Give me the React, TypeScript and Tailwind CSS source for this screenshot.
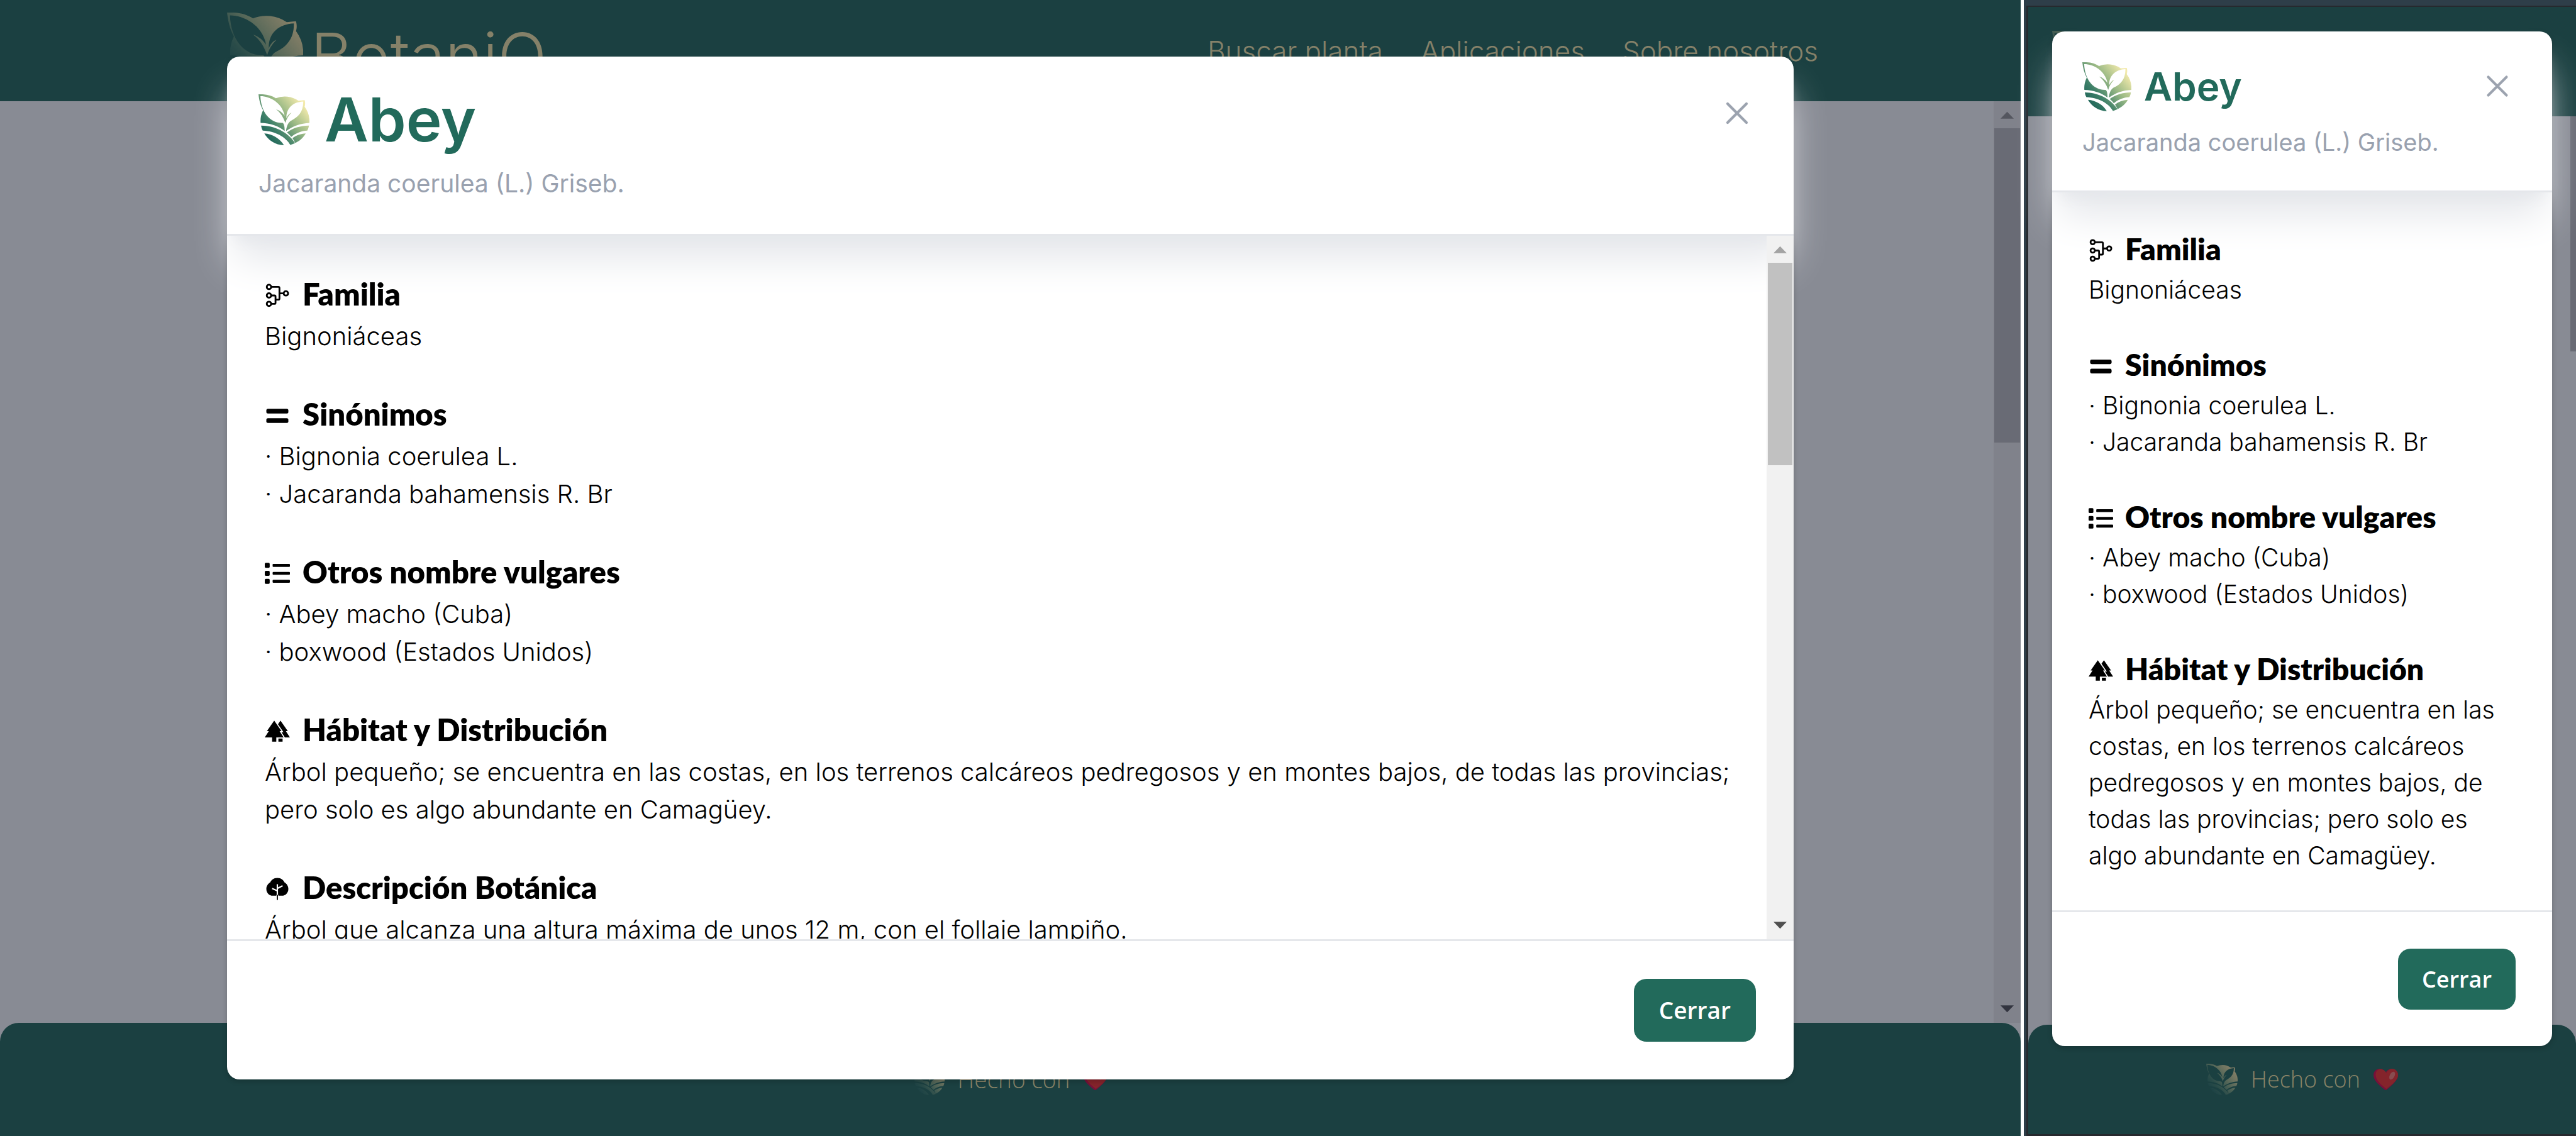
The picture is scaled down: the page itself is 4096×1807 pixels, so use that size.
import { useId, type ReactNode } from "react";
import { MdForest } from "react-icons/md";

type LogoTone = "bright" | "dim";

function Logo({ tone, className }: { tone: LogoTone; className: string }) {
  const id = useId();
  const stops =
    tone === "bright"
      ? ["#20675a", "#3d7f68", "#9dbb86", "#f3eaac"]
      : ["#1b4144", "#2a4c49", "#5a6a5a", "#857f67"];
  return (
    <svg viewBox="36 60 288 288" className={className} aria-hidden="true">
      <defs>
        <linearGradient id={id} gradientUnits="userSpaceOnUse" x1="85" y1="310" x2="300" y2="125">
          <stop offset="0" stopColor={stops[0]} />
          <stop offset="0.25" stopColor={stops[1]} />
          <stop offset="0.62" stopColor={stops[2]} />
          <stop offset="1" stopColor={stops[3]} />
        </linearGradient>
      </defs>
      <g fill={`url(#${id})`} fillRule="evenodd">
        <path d="M48 222 A138 138 0 0 1 62 150 C46 122 40 92 36 60 C78 58 110 66 134 82 A138 138 0 0 1 262 96 L297 93 C301 108 300 120 297 130 A138 138 0 0 1 324 222 C275 224 230 240 192 268 L184 268 C150 238 100 224 48 222 Z M47 71 C50 160 100 225 174 222 C182 230 184 245 184 268 L192 268 C194 240 205 216 222 208 C260 190 290 160 289 101 C230 103 192 140 194 195 C200 180 210 168 223 163 C206 180 194 200 188 222 C176 188 160 162 135 144 C155 150 172 164 184 182 C170 105 95 70 47 71 Z" />
        <path d="M51 237 C125 238 200 270 243 336 L231 341 L216 346 C190 300 130 268 60 265 C55 256 52 247 51 237 Z" />
        <path d="M69 281 C115 284 158 310 180 348 C130 346 92 320 69 281 Z" />
        <path d="M321 237 C275 238 230 250 197 276 C206 283 214 291 221 301 C245 280 280 266 312 265 C317 256 320 247 321 237 Z" />
        <path d="M303 281 C275 283 248 292 228 308 C234 316 239 325 243 335 C268 325 290 305 303 281 Z" />
      </g>
    </svg>
  );
}

function Heart({ className }: { className: string }) {
  return (
    <svg viewBox="0 0 46 41" className={className} role="img" aria-label="amor">
      <path d="M23 41 C19 37 0 25 0 12 C0 4 6 0 12 0 C17 0 21 3 23 7 C25 3 30 0 34 0 C40 0 46 5 46 12 C46 24 28 36 23 41 Z" fill="#771039" />
      <path d="M24 38 C19 33 4 24 4 11 C4 4 9 1 13 1 C18 1 22 4 24 8 C26 4 30 0 35 0 C41 0 46 5 46 12 C46 23 29 34 24 38 Z" fill="#84242b" />
      <ellipse cx="35" cy="13" rx="4.5" ry="8" transform="rotate(28 35 13)" fill="#884c4f" />
    </svg>
  );
}

function FamilyIcon({ className }: { className: string }) {
  return (
    <svg viewBox="0 0 48 48" className={className} fill="none" stroke="black" strokeWidth="3.4" aria-hidden="true">
      <circle cx="8" cy="7.7" r="4.2" />
      <circle cx="8" cy="24" r="4.2" />
      <circle cx="8" cy="40" r="4.2" />
      <circle cx="40.3" cy="20" r="4.2" />
      <path d="M12.2 7.7 H26 Q28 7.7 28 9.7 V30 Q28 32 26 32 H20.5 M28 20 H36 M12.2 24 H18.5 Q20.5 24 20.5 26 V38 Q20.5 40 18.5 40 H12.2" />
    </svg>
  );
}

function EqualsIcon({ className }: { className: string }) {
  return (
    <svg viewBox="0 0 48 48" className={className} aria-hidden="true">
      <rect x="3" y="11" width="42" height="9" rx="3" />
      <rect x="3" y="29" width="42" height="9" rx="3" />
    </svg>
  );
}

function ListIcon({ className }: { className: string }) {
  return (
    <svg viewBox="0 0 48 48" className={className} aria-hidden="true">
      <rect x="0" y="4" width="9.4" height="9.4" rx="2" />
      <rect x="0" y="19.3" width="9.4" height="9.4" rx="2" />
      <rect x="0" y="34.6" width="9.4" height="9.4" rx="2" />
      <rect x="15" y="6" width="33" height="5.6" rx="1.5" />
      <rect x="15" y="21.2" width="33" height="5.6" rx="1.5" />
      <rect x="15" y="36.4" width="33" height="5.6" rx="1.5" />
    </svg>
  );
}

function TreeIcon({ className }: { className: string }) {
  return (
    <svg viewBox="0 0 48 48" className={className} aria-hidden="true">
      <path d="M24 3 C31 3 36 7 37.5 11.5 C42 14 45 19 45 24 C45 32 39 37 33 37 H15 C9 37 3 32 3 24 C3 19 6 14 10.5 11.5 C12 7 17 3 24 3 Z" />
      <path d="M24 15 V35.5 M24 27.5 L14 23 M24 23 L34 18" stroke="white" strokeWidth="2.6" fill="none" />
      <path d="M24 35.5 V45" stroke="white" strokeWidth="4" />
      <path d="M24 35.5 V45" stroke="black" strokeWidth="2.2" />
    </svg>
  );
}

function CloseIcon({ className }: { className: string }) {
  return (
    <svg viewBox="0 0 24 24" className={className} fill="none" stroke="#9ca3af" strokeWidth="1.7" strokeLinecap="round" aria-hidden="true">
      <path d="M6 6 L18 18 M18 6 L6 18" />
    </svg>
  );
}

function Arrow({ up, color }: { up?: boolean; color: string }) {
  return (
    <svg viewBox="0 0 51 51" className="block w-full shrink-0" aria-hidden="true">
      <path d={up ? "M13 33 L38 33 L25.5 20 Z" : "M13 18 L38 18 L25.5 31 Z"} fill={color} />
    </svg>
  );
}

type Section = {
  title: string;
  icon: (p: { className: string }) => ReactNode;
  lines: string[];
};

const sections: Section[] = [
  { title: "Familia", icon: FamilyIcon, lines: ["Bignoniáceas"] },
  { title: "Sinónimos", icon: EqualsIcon, lines: ["· Bignonia coerulea L.", "· Jacaranda bahamensis R. Br"] },
  { title: "Otros nombre vulgares", icon: ListIcon, lines: ["· Abey macho (Cuba)", "· boxwood (Estados Unidos)"] },
  {
    title: "Hábitat y Distribución",
    icon: ({ className }) => <MdForest className={className} />,
    lines: [
      "Árbol pequeño; se encuentra en las costas, en los terrenos calcáreos pedregosos y en montes bajos, de todas las provincias; pero solo es algo abundante en Camagüey.",
    ],
  },
];

const description: Section = {
  title: "Descripción Botánica",
  icon: TreeIcon,
  lines: ["Árbol que alcanza una altura máxima de unos 12 m, con el follaje lampiño."],
};

const wide = {
  header: "px-[50px] pt-[50px] pb-[50px]",
  titleRow: "h-[100px] gap-[24px]",
  logo: "size-[81px]",
  title: "text-[96px]",
  subtitle: "mt-[22px] text-[39px] leading-[60px]",
  close: "m-[10px]",
  closeIcon: "size-[60px]",
  body: "pl-[60px] pr-[20px] pt-[60px] gap-[61px]",
  headingRow: "h-[70px] gap-[20px] text-[49px]",
  headingIcon: "size-[40px]",
  text: "text-[40px] leading-[60px]",
  footer: "p-[60px]",
  button: "h-[100px] px-[40px] text-[37px]",
};

const narrow: typeof wide = {
  header: "px-[48px] pt-[48px] pb-[48px]",
  titleRow: "h-[80px] gap-[20px]",
  logo: "size-[78px]",
  title: "text-[62px]",
  subtitle: "mt-[19px] text-[38px] leading-[58px]",
  close: "m-[10px]",
  closeIcon: "size-[58px]",
  body: "pl-[58px] pr-[80px] pt-[58px] pb-[58px] gap-[58px]",
  headingRow: "h-[68px] gap-[19px] text-[48px]",
  headingIcon: "size-[39px]",
  text: "text-[39px] leading-[58px]",
  footer: "p-[58px]",
  button: "h-[97px] px-[38px] text-[36px]",
};

function PlantModal({
  sizes,
  items,
  className,
  scrollbar,
}: {
  sizes: typeof wide;
  items: Section[];
  className: string;
  scrollbar?: ReactNode;
}) {
  return (
    <div
      role="dialog"
      aria-label="Abey"
      className={`absolute flex flex-col rounded-[20px] bg-white shadow-[0_3px_8px_rgba(0,0,0,0.2)] ${className}`}
    >
      <header
        className={`flex items-start justify-between rounded-t-[20px] border-b-[3px] border-gray-200 shadow-[0_50px_63px_-13px_#e5e7eb,0_20px_25px_-15px_#e5e7eb] ${sizes.header}`}
      >
        <div>
          <div className={`flex items-center ${sizes.titleRow}`}>
            <Logo tone="bright" className={sizes.logo} />
            <h2 className={`font-['Inter',sans-serif] leading-none font-semibold text-[#226a5b] ${sizes.title}`}>Abey</h2>
          </div>
          <p className={`font-['Inter',sans-serif] text-gray-400 ${sizes.subtitle}`}>Jacaranda coerulea (L.) Griseb.</p>
        </div>
        <button type="button" aria-label="Cerrar ventana" className={sizes.close}>
          <CloseIcon className={sizes.closeIcon} />
        </button>
      </header>
      <div className="flex min-h-0 flex-1 overflow-hidden">
        <div className={`flex min-w-0 flex-1 flex-col ${sizes.body}`}>
          {items.map(({ title, icon: Icon, lines }) => (
            <section key={title} className="shrink-0">
              <h3 className={`flex items-center font-['Lato',sans-serif] font-extrabold text-black ${sizes.headingRow}`}>
                <Icon className={`shrink-0 ${sizes.headingIcon}`} />
                <span className="pb-1">{title}</span>
              </h3>
              {lines.map((line) => (
                <p key={line} className={`font-['Inter',sans-serif] font-light text-black ${sizes.text}`}>
                  {line}
                </p>
              ))}
            </section>
          ))}
        </div>
        {scrollbar}
      </div>
      <footer className={`flex justify-end rounded-b-[20px] border-t-[3px] border-gray-200 ${sizes.footer}`}>
        <button
          type="button"
          className={`rounded-[20px] bg-[#226a5b] font-['Open_Sans',sans-serif] font-semibold text-white ${sizes.button}`}
        >
          Cerrar
        </button>
      </footer>
    </div>
  );
}

function PageFooter({ className }: { className: string }) {
  return (
    <footer
      className={`flex items-center justify-center gap-[21px] rounded-t-[30px] bg-[#1b4041] font-['Open_Sans',sans-serif] font-light text-[#8a8468] ${className}`}
    >
      <Logo tone="dim" className="size-[50px]" />
      <span>Hecho con</span>
      <Heart className="w-[39px]" />
    </footer>
  );
}

export default function App() {
  return (
    <div className="flex h-screen w-full gap-[5px] overflow-hidden bg-white">
      <div className="relative flex min-w-0 flex-[3213_1_0%] flex-col bg-[#888b94]">
        <header className="flex h-[161px] shrink-0 items-center justify-between bg-[#1b4041] pr-[322px] pl-[361px] font-['Inter',sans-serif] font-light text-[#858169]">
          <a href="#inicio" className="flex items-center gap-[12px] text-[102px] leading-none">
            <Logo tone="dim" className="size-[121px]" />
            <span className="pt-4">BotaniQ</span>
          </a>
          <nav className="flex gap-[60px] text-[44px]">
            <a href="#buscar">Buscar planta</a>
            <a href="#aplicaciones">Aplicaciones</a>
            <a href="#nosotros">Sobre nosotros</a>
          </nav>
        </header>
        <main className="flex flex-1 justify-end">
          <div className="flex w-[43px] flex-col bg-[#80828b]">
            <Arrow up color="#54565f" />
            <div className="mx-px h-[500px] bg-[#696b75]" />
            <div className="flex-1" />
            <Arrow color="#32343f" />
          </div>
        </main>
        <PageFooter className="h-[180px] shrink-0 text-[37px]" />
        <PlantModal
          sizes={wide}
          items={[...sections, description]}
          className="inset-x-[361px] inset-y-[90px]"
          scrollbar={
            <div className="flex w-[43px] shrink-0 flex-col bg-[#f1f1f1]">
              <Arrow up color="#a3a3a3" />
              <div className="mx-[2px] h-[322px] bg-[#c1c1c1]" />
              <div className="flex-1" />
              <Arrow color="#505050" />
            </div>
          }
        />
      </div>

      <div className="flex min-w-0 flex-[878_1_0%] flex-col">
        <div className="flex flex-1 flex-col border-t-[9px] border-l-[4px] border-[#2e3e49]">
          <div className="relative flex flex-1 flex-col border-t-2 border-b-[3px] border-l-[3px] border-[#26292e] bg-[#888b94]">
            <header className="flex h-[174px] shrink-0 items-center bg-[#1b4041] pl-[38px]">
              <Logo tone="dim" className="size-[98px]" />
            </header>
            <main className="flex flex-1 justify-end">
              <div className="h-[374px] w-[9px] bg-[#696b75]" />
            </main>
            <PageFooter className="h-[174px] shrink-0 text-[36px]" />
            <PlantModal sizes={narrow} items={sections} className="inset-x-[38px] top-[39px]" />
          </div>
        </div>
      </div>
    </div>
  );
}
